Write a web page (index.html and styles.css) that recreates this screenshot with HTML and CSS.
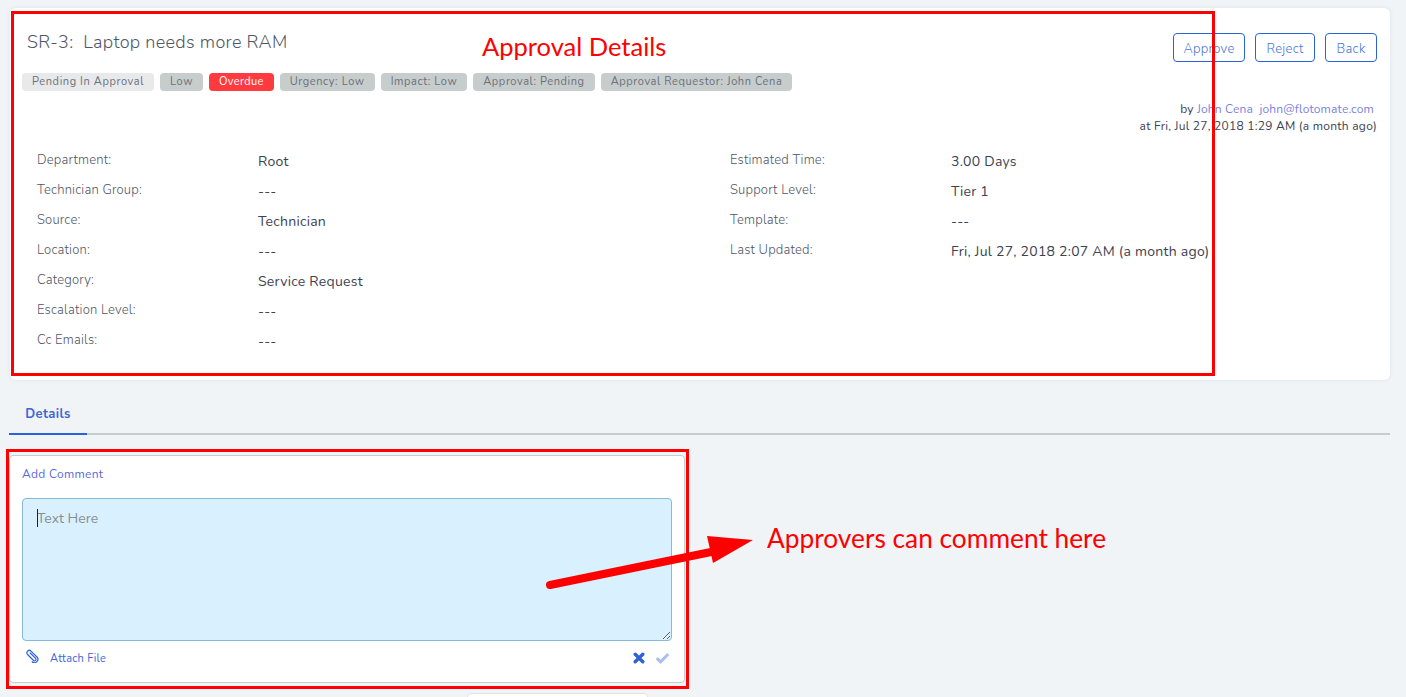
FILE: index.html
```html
<!DOCTYPE html>
<html lang="en">
<head>
<meta charset="utf-8">
<title>SR-3: Laptop needs more RAM</title>
<link rel="stylesheet" href="styles.css">
</head>
<body>
<main class="page">
  <section class="card">
    <div class="head">
      <div class="head-main">
        <h1 class="title">SR-3:&nbsp; Laptop needs more RAM</h1>
        <div class="tags">
          <span class="tag tag-light">Pending In Approval</span>
          <span class="tag">Low</span>
          <span class="tag tag-red">Overdue</span>
          <span class="tag">Urgency: Low</span>
          <span class="tag">Impact: Low</span>
          <span class="tag">Approval: Pending</span>
          <span class="tag">Approval Requestor: John Cena</span>
        </div>
      </div>
      <div class="head-side">
        <div class="actions">
          <button class="btn btn-approve">Approve</button>
          <button class="btn btn-reject">Reject</button>
          <button class="btn btn-back">Back</button>
        </div>
        <div class="meta">
          <div class="meta-by">by <a class="link">John Cena</a>&nbsp; <a class="link">john@flotomate.com</a></div>
          <div>at Fri, Jul 27, 2018 1:29 AM (a month ago)</div>
        </div>
      </div>
    </div>
    <div class="details">
      <dl class="col">
        <div class="row"><dt>Department:</dt><dd>Root</dd></div>
        <div class="row"><dt>Technician Group:</dt><dd>---</dd></div>
        <div class="row"><dt>Source:</dt><dd>Technician</dd></div>
        <div class="row"><dt>Location:</dt><dd>---</dd></div>
        <div class="row"><dt>Category:</dt><dd>Service Request</dd></div>
        <div class="row"><dt>Escalation Level:</dt><dd>---</dd></div>
        <div class="row"><dt>Cc Emails:</dt><dd>---</dd></div>
      </dl>
      <dl class="col">
        <div class="row"><dt>Estimated Time:</dt><dd>3.00 Days</dd></div>
        <div class="row"><dt>Support Level:</dt><dd>Tier 1</dd></div>
        <div class="row"><dt>Template:</dt><dd>---</dd></div>
        <div class="row"><dt>Last Updated:</dt><dd>Fri, Jul 27, 2018 2:07 AM (a month ago)</dd></div>
      </dl>
    </div>
  </section>

  <nav class="tabs"><a class="tab">Details</a></nav>

  <section class="comment">
    <a class="add">Add Comment</a>
    <div class="field"><span class="caret"></span><textarea class="input" placeholder="Text Here"></textarea></div>
    <div class="comment-foot">
      <a class="attach">
        <svg class="clip" viewBox="0 0 14 14" width="14" height="14" aria-hidden="true"><path d="M5.2 4 10.6 9.4a1.5 1.5 0 0 1-2.1 2.1L2.6 5.5a2.4 2.4 0 0 1 3.4-3.4L12 8a3.4 3.4 0 0 1-4.8 4.8" fill="none" stroke="#2f62d8" stroke-width="1.2" stroke-linecap="round"/></svg>
        <span>Attach File</span>
      </a>
      <div class="foot-icons">
        <svg viewBox="0 0 12 12" width="12" height="12" aria-hidden="true"><path d="M2.2 2.2 9.8 9.8M9.8 2.2 2.2 9.8" stroke="#2f62d8" stroke-width="3.4" stroke-linecap="round" fill="none"/></svg>
        <svg viewBox="0 0 15 12" width="15" height="12" aria-hidden="true"><path d="M1.8 6.2 5.6 9.8 13.2 2" stroke="#aabff0" stroke-width="3" fill="none"/></svg>
      </div>
    </div>
  </section>
  <div class="next-stub"></div>
</main>

<div class="mark mark-top"></div>
<div class="mark mark-bottom"></div>
<p class="note note-top">Approval Details</p>
<p class="note note-side">Approvers can comment here</p>
<svg class="arrow" viewBox="0 0 220 70" width="220" height="70" aria-hidden="true">
  <path d="M4 52 170 18" stroke="#ff0000" stroke-width="8" stroke-linecap="round" fill="none"/>
  <path d="M161 3 207 7 167 30Z" fill="#ff0000"/>
</svg>
</body>
</html>
```
FILE: styles.css
```css
* { box-sizing: border-box; }
html, body { margin: 0; height: 100%; }
body {
  background: #f0f4f7;
  font-family: "Nunito", "Lato", "Open Sans", sans-serif;
  color: #3c4250;
  overflow: hidden;
  position: relative;
}
.page { padding: 8px 16px 0 9px; display: flex; flex-direction: column; }

.card {
  margin-left: 1px;
  height: 372px;
  background: #fff;
  border-radius: 6px;
  box-shadow: 0 0 4px rgba(90, 110, 130, .12);
  padding: 0 13px 0 12px;
}
.head { display: flex; justify-content: space-between; }
.title {
  margin: 23px 0 0 5px;
  font-size: 18px;
  line-height: 22px;
  font-weight: 300;
  letter-spacing: .32px;
  color: #4f5766;
}
.tags { display: flex; gap: 6px; margin-top: 20px; }
.tag {
  height: 18px;
  line-height: 18px;
  padding: 0 10px;
  border-radius: 4px;
  font-size: 11px;
  letter-spacing: .6px;
  background: #c7cccc;
  color: #69707a;
}
.tag-light { background: #e8e9ea; }
.tag-red { background: #ff3b3f; color: #fff; letter-spacing: .35px; }

.head-side { display: flex; flex-direction: column; align-items: flex-end; }
.actions { display: flex; gap: 10px; margin-top: 25px; }
.btn {
  height: 29px;
  padding: 2px 0 0;
  background: #fff;
  border: 1px solid #2a62d9;
  border-radius: 4px;
  color: #4a76dc;
  font: inherit;
  font-size: 13px;
  font-weight: 300;
  letter-spacing: .3px;
}
.btn-approve { width: 72px; }
.btn-reject { width: 60px; }
.btn-back { width: 52px; }
.meta {
  margin-top: 39px;
  font-size: 12px;
  line-height: 17px;
  letter-spacing: .25px;
  text-align: right;
  color: #3c4250;
}
.meta-by { padding-right: 3px; letter-spacing: .17px; }
.link { color: #7c7fe0; }

.details { display: grid; grid-template-columns: 693px 1fr; margin-top: 17px; padding-left: 15px; }
.col { margin: 0; }
.row { display: flex; height: 30px; }
dt {
  width: 221px;
  font-size: 13px;
  line-height: 16px;
  font-weight: 300;
  letter-spacing: .2px;
  color: #4f5766;
}
dd {
  margin: 1px 0 0;
  font-size: 14px;
  line-height: 17px;
  letter-spacing: .25px;
  color: #3c4250;
  white-space: nowrap;
}

.tabs { height: 55px; border-bottom: 2px solid #c7cccc; display: flex; align-items: flex-end; }
.tab {
  width: 78px;
  height: 46px;
  margin-bottom: -2px;
  padding-top: 17px;
  border-bottom: 2px solid #2a62d9;
  text-align: center;
  font-size: 13px;
  line-height: 17px;
  font-weight: 700;
  letter-spacing: .4px;
  color: #3d66d4;
}

.comment {
  width: 676px;
  height: 228px;
  margin-top: 20px;
  background: #fff;
  border: 1px solid #c7cccc;
  border-radius: 4px;
  padding: 11px 12px 0;
}
.add {
  display: block;
  font-size: 12px;
  line-height: 14px;
  letter-spacing: .3px;
  color: #5a6ad8;
}
.field { position: relative; margin-top: 17px; height: 143px; }
.input {
  display: block;
  width: 100%;
  height: 100%;
  padding: 10px 14px;
  background: #d9f1fe;
  border: 1px solid #86b9de;
  border-radius: 4px;
  outline: none;
  font: inherit;
  font-size: 14px;
}
.input::placeholder { color: #888e92; opacity: 1; }
.caret { position: absolute; left: 15px; top: 11px; width: 1px; height: 18px; background: #222; }
.comment-foot {
  display: flex;
  justify-content: space-between;
  align-items: center;
  height: 34px;
  padding: 0 2px 0 3px;
}
.attach { display: flex; align-items: center; gap: 11px; font-size: 11px; letter-spacing: .25px; color: #3d66d4; }
.clip { margin-top: -4px; }
.foot-icons { display: flex; align-items: center; gap: 10px; }
.next-stub {
  width: 181px;
  height: 20px;
  margin: 10px 0 0 458px;
  background: #fff;
  border: 1px solid #dfe3e6;
  border-radius: 4px;
}

.mark { position: absolute; border: 3px solid #ff0000; }
.mark-top { left: 11px; top: 11px; width: 1204px; height: 365px; }
.mark-bottom { left: 6px; top: 449px; width: 683px; height: 240px; }
.note {
  position: absolute;
  margin: 0;
  font-family: "Lato", sans-serif;
  color: #ff0000;
  white-space: nowrap;
}
.note-top { left: 482px; top: 30px; font-size: 25.5px; line-height: 32px; }
.note-side { left: 767px; top: 522px; font-size: 26.3px; line-height: 32px; }
.arrow { position: absolute; left: 546px; top: 533px; }
```
